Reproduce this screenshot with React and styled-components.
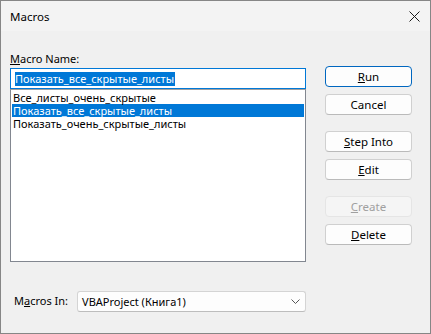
import React from 'react'
import styled, { createGlobalStyle } from 'styled-components'

const GlobalStyle = createGlobalStyle`
  html, body {
    margin: 0;
    padding: 0;
    background: #f0f0f0;
  }
  body {
    font-family: "Noto Sans", "Open Sans", sans-serif;
    font-size: 11px;
    color: #000;
  }
`

const Window = styled.div`
  box-sizing: border-box;
  width: 431px;
  height: 334px;
  border: 1px solid #868686;
  background: #f0f0f0;
  display: flex;
  flex-direction: column;
`

const TitleBar = styled.div`
  height: 30px;
  background: #f3f3f3;
  display: flex;
  align-items: center;
  justify-content: space-between;
  padding: 0 10px 0 9px;
  font-size: 11.5px;
`

const CloseIcon = styled.svg`
  width: 11px;
  height: 11px;
  display: block;
`

const Body = styled.div`
  flex: 1;
  display: grid;
  grid-template-columns: 296px 87px;
  column-gap: 19px;
  padding: 20px 0 0 9px;
`

const LeftColumn = styled.div`
  display: flex;
  flex-direction: column;
`

const Label = styled.label`
  line-height: 16px;
  margin-bottom: 1px;
  margin-left: ${ props => props.indent || 0 }px;
  white-space: nowrap;
`

const Key = styled.span`
  text-decoration: underline;
  text-underline-offset: 1px;
`

const NameInput = styled.div`
  box-sizing: border-box;
  height: 21px;
  border: 1px solid #0078d7;
  background: #fff;
  display: flex;
  align-items: center;
  padding-left: 4px;

  span {
    background: #0078d7;
    color: #fff;
    line-height: 14px;
    padding-right: 1px;
  }
`

const ListBox = styled.ul`
  box-sizing: border-box;
  height: 173px;
  margin: 0;
  padding: 1px;
  list-style: none;
  border: 1px solid #828790;
  border-top-color: #a0a0a0;
  background: #fff;
`

const ListItem = styled.li`
  height: 13px;
  line-height: 13px;
  padding-left: 1px;
  white-space: nowrap;
  background: ${ props => props.selected ? '#0078d7' : 'transparent' };
  color: ${ props => props.selected ? '#fff' : '#000' };
`

const BottomRow = styled.div`
  display: flex;
  align-items: center;
  margin-top: 29px;
  padding-left: 4px;
  gap: 9px;
`

const Select = styled.div`
  box-sizing: border-box;
  width: 236px;
  height: 21px;
  border: 1px solid #d4d4d4;
  border-bottom-color: #bdbdbd;
  border-radius: 3px;
  background: #fdfdfd;
  display: flex;
  align-items: center;
  justify-content: space-between;
  padding: 0 5px 0 4px;
`

const RightColumn = styled.div`
  display: flex;
  flex-direction: column;
  padding-top: 15px;
`

const Button = styled.button`
  box-sizing: border-box;
  width: 87px;
  height: 21px;
  margin-top: ${ props => props.gap || 0 }px;
  padding: 0;
  border: 1px solid ${ props => props.primary ? '#0067c0' : props.disabled ? '#e5e5e5' : '#d0d0d0' };
  border-bottom-color: ${ props => props.primary ? '#0067c0' : props.disabled ? '#e5e5e5' : '#bababa' };
  border-radius: 4px;
  background: ${ props => props.disabled ? '#f5f5f5' : '#fdfdfd' };
  color: ${ props => props.disabled ? '#a0a0a0' : '#000' };
  font-family: inherit;
  font-size: 11.5px;
  line-height: 16px;
`

function Mnemonic( { text, at = 0 } ) {
  return (
    <>
      { text.slice( 0, at ) }
      <Key>{ text[ at ] }</Key>
      { text.slice( at + 1 ) }
    </>
  )
}

const macros = [
  'Все_листы_очень_скрытые',
  'Показать_все_скрытые_листы',
  'Показать_очень_скрытые_листы',
]

const buttons = [
  { text: 'Run', key: 0, gap: 0, primary: true },
  { text: 'Cancel', gap: 7 },
  { text: 'Step Into', key: 0, gap: 16 },
  { text: 'Edit', key: 0, gap: 7 },
  { text: 'Create', key: 0, gap: 16, disabled: true },
  { text: 'Delete', key: 0, gap: 7 },
]

export default function App() {
  return (
    <>
      <GlobalStyle />
      <Window>
        <TitleBar>
          <span>Macros</span>
          <CloseIcon viewBox="0 0 11 11">
            <path d="M0.5 0.5 L10.5 10.5 M10.5 0.5 L0.5 10.5" stroke="#1a1a1a" strokeWidth="1" fill="none" />
          </CloseIcon>
        </TitleBar>
        <Body>
          <LeftColumn>
            <Label>
              <Mnemonic text="Macro Name:" />
            </Label>
            <NameInput>
              <span>Показать_все_скрытые_листы</span>
            </NameInput>
            <ListBox>
              { macros.map( ( name, i ) => (
                <ListItem key={ name } selected={ i === 1 }>{ name }</ListItem>
              ) ) }
            </ListBox>
            <BottomRow>
              <Label as="span">
                <Mnemonic text="Macros In:" at={ 1 } />
              </Label>
              <Select>
                <span>VBAProject (Книга1)</span>
                <svg width="9" height="5" viewBox="0 0 9 5">
                  <path d="M0.5 0.5 L4.5 4.5 L8.5 0.5" stroke="#555" strokeWidth="1" fill="none" />
                </svg>
              </Select>
            </BottomRow>
          </LeftColumn>
          <RightColumn>
            { buttons.map( b => (
              <Button
                key={ b.text }
                gap={ b.gap }
                primary={ b.primary }
                disabled={ b.disabled }
              >
                { b.key === undefined ? b.text : <Mnemonic text={ b.text } at={ b.key } /> }
              </Button>
            ) ) }
          </RightColumn>
        </Body>
      </Window>
    </>
  )
}
